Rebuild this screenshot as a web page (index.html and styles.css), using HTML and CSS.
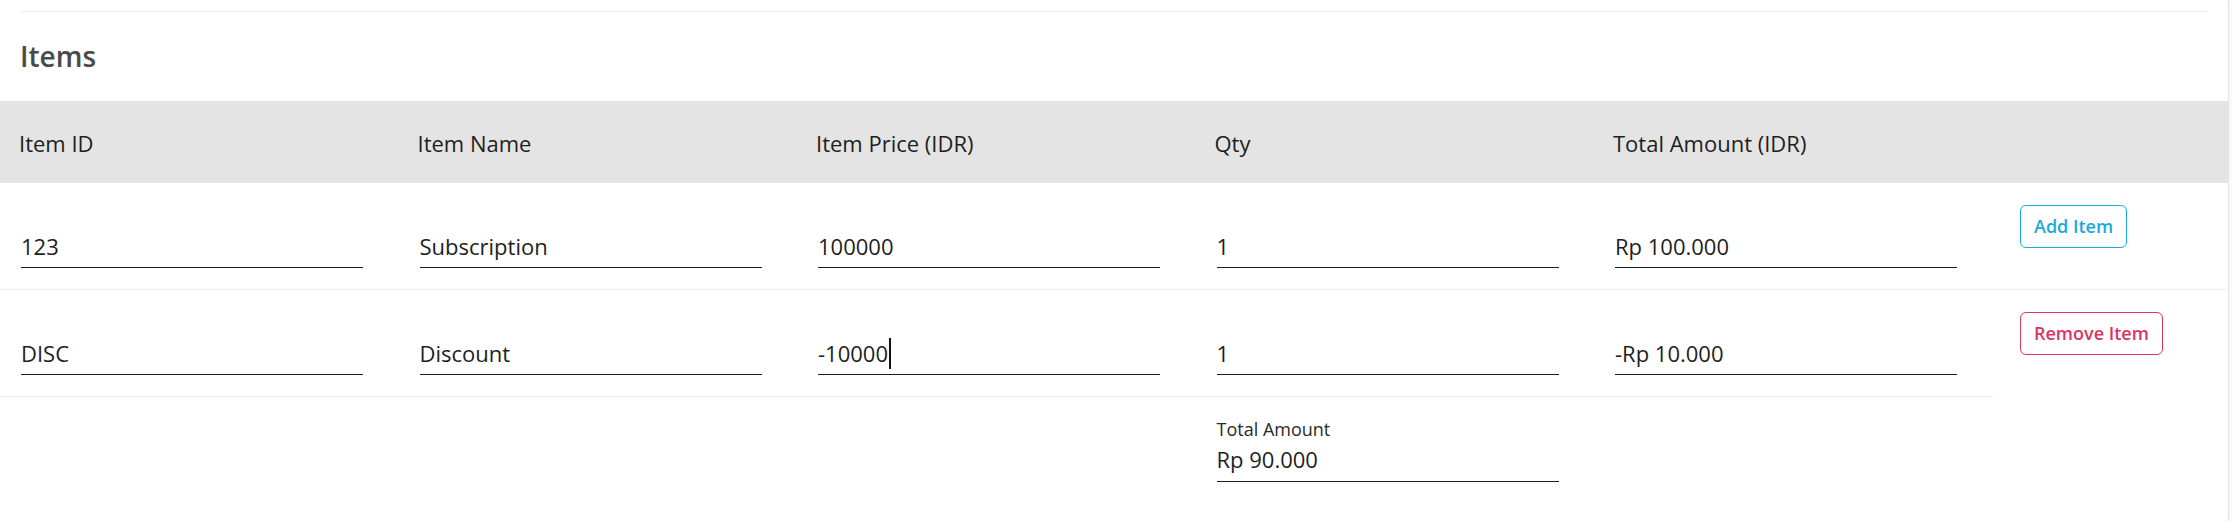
FILE: index.html
```html
<!DOCTYPE html>
<html lang="en">
<head>
<meta charset="utf-8">
<title>Items</title>
<link rel="stylesheet" href="styles.css">
</head>
<body>
<main class="card">
  <div class="divider"></div>
  <h2 class="title">Items</h2>
  <table class="items">
    <colgroup>
      <col class="c-field"><col class="c-field"><col class="c-field"><col class="c-field"><col class="c-field"><col class="c-action">
    </colgroup>
    <thead>
      <tr>
        <th>Item ID</th>
        <th>Item Name</th>
        <th>Item Price (IDR)</th>
        <th>Qty</th>
        <th>Total Amount (IDR)</th>
        <th></th>
      </tr>
    </thead>
    <tbody>
      <tr class="row">
        <td><div class="field">123</div></td>
        <td><div class="field">Subscription</div></td>
        <td><div class="field">100000</div></td>
        <td><div class="field">1</div></td>
        <td><div class="field">Rp 100.000</div></td>
        <td class="action"><button class="btn btn-add" type="button">Add Item</button></td>
      </tr>
      <tr class="row last">
        <td><div class="field">DISC</div></td>
        <td><div class="field">Discount</div></td>
        <td><div class="field">-10000<span class="caret"></span></div></td>
        <td><div class="field">1</div></td>
        <td><div class="field">-Rp 10.000</div></td>
        <td class="action"><button class="btn btn-remove" type="button">Remove Item</button></td>
      </tr>
    </tbody>
    <tfoot>
      <tr>
        <td></td><td></td><td></td>
        <td class="total">
          <div class="total-label">Total Amount</div>
          <div class="field total-value">Rp 90.000</div>
        </td>
        <td></td><td></td>
      </tr>
    </tfoot>
  </table>
</main>
</body>
</html>
```

FILE: styles.css
```css
html, body {
  margin: 0;
  height: 100%;
  background: #ffffff;
}

body {
  font-family: "Open Sans", "Noto Sans", sans-serif;
  color: #212121;
}

.card {
  width: 2229px;
  min-height: 100%;
  box-sizing: border-box;
  padding-top: 11px;
  border-right: 1px solid #e4e4e4;
  box-shadow: 2px 0 4px rgba(0, 0, 0, 0.05);
}

.divider {
  height: 1px;
  background: #efefef;
  margin: 0 20px;
}

.title {
  margin: 25px 0 26px 20px;
  font-size: 28px;
  line-height: 38px;
  font-weight: 600;
  color: #4a4a4a;
}

.items {
  width: 2228px;
  border-collapse: collapse;
  table-layout: fixed;
}

.c-field {
  width: 398.5px;
}

.items th {
  background: #e4e4e4;
  font-weight: 400;
  font-size: 22px;
  line-height: 30px;
  padding: 27px 20px 25px 19px;
  text-align: left;
  white-space: nowrap;
  color: #1e1e1e;
}

.items td {
  padding: 22px 35.5px 21px 21px;
  vertical-align: top;
  font-size: 22px;
}

.row td {
  border-bottom: 1px solid #ededed;
}

.row.last td.action {
  border-bottom: none;
}

.field {
  height: 31px;
  padding: 26px 0 5px;
  line-height: 31px;
  border-bottom: 1px solid #1c1c1c;
  white-space: nowrap;
  color: #1e1e1e;
}

.caret {
  display: inline-block;
  width: 2px;
  height: 31px;
  margin-left: 1px;
  background: #111111;
  vertical-align: top;
}

.items td.action {
  padding: 22px 0 0 27.5px;
}

.btn {
  font-family: "Open Sans", "Noto Sans", sans-serif;
  font-size: 18px;
  font-weight: 600;
  line-height: 25px;
  padding: 8px 13px;
  border-radius: 6px;
  background: #ffffff;
  border: 1px solid currentColor;
  cursor: pointer;
}

.btn-add {
  color: #1ba9db;
}

.btn-remove {
  color: #dc3461;
}

.items tfoot td {
  padding: 20px 35.5px 0 21px;
}

.total-label {
  font-size: 18px;
  line-height: 24px;
  color: #2a2a2a;
}

.total-value {
  margin-top: 3px;
  padding-top: 0;
  padding-bottom: 6px;
}
```
